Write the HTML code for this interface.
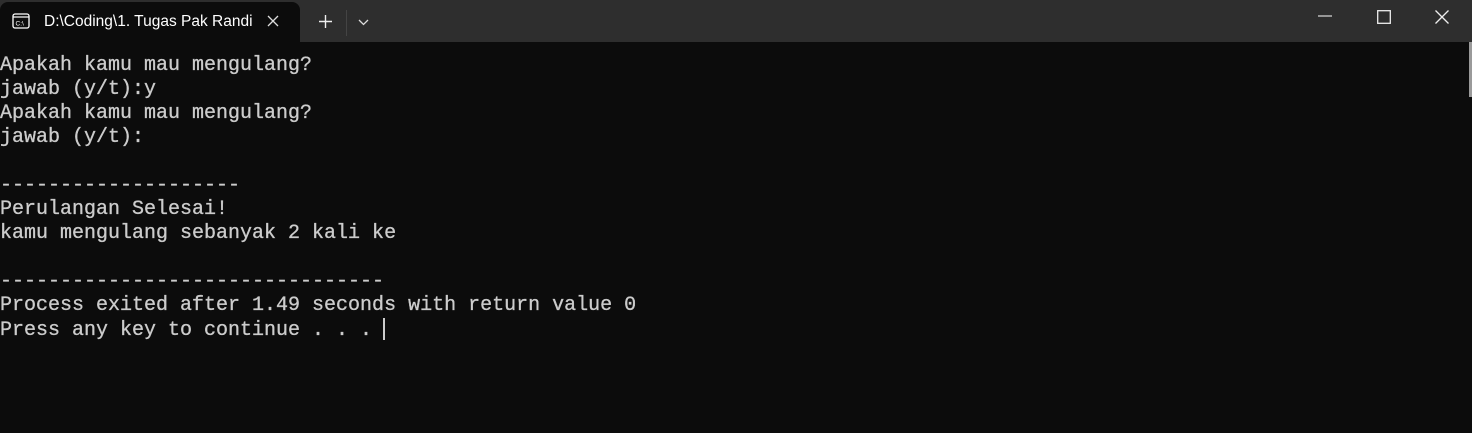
<!DOCTYPE html>
<html><head><meta charset="utf-8"><style>
*{margin:0;padding:0;box-sizing:border-box}
body{width:1472px;height:433px;background:#0c0c0c;overflow:hidden;position:relative;font-family:"Liberation Sans",sans-serif}
.bar{position:absolute;left:0;top:0;width:1472px;height:42px;background:#2e2e2e}
.tab{position:absolute;left:0;top:2px;width:300px;height:40px;background:#0c0c0c;border-radius:8px 8px 0 0}
.title{position:absolute;left:44px;top:13px;color:#fff;font-size:15.5px}
pre{position:absolute;left:0;top:54px;color:#cccccc;font-family:"Liberation Mono",monospace;font-size:20px;line-height:24px;-webkit-text-stroke:0.3px #cccccc}
.cur{display:inline-block;width:2px;height:22px;background:#ccc;vertical-align:-5px;margin-left:-1px}
.sb{position:absolute;left:1469px;top:42px;width:3px;height:55px;background:#9a9a9a}
</style></head><body>
<div class="bar"></div>
<div class="tab"></div>
<svg style="position:absolute;left:12px;top:13px" width="18" height="16" viewBox="0 0 18 16"><rect x="1" y="1" width="16" height="14" rx="2" fill="none" stroke="#fff" stroke-width="1.3"/><line x1="1" y1="4" x2="17" y2="4" stroke="#fff" stroke-width="1.2"/><text x="3.5" y="12.5" font-size="6.5" fill="#fff" font-family="Liberation Sans">C:\</text></svg>
<div class="title">D:\Coding\1. Tugas Pak Randi</div>
<svg style="position:absolute;left:267px;top:15px" width="12" height="12"><path d="M1 1L11 11M11 1L1 11" stroke="#ddd" stroke-width="1.3"/></svg>
<svg style="position:absolute;left:319px;top:15px" width="13" height="13"><path d="M6.5 0V13M0 6.5H13" stroke="#eee" stroke-width="1.4"/></svg>
<div style="position:absolute;left:346px;top:10px;width:1px;height:26px;background:#444"></div>
<svg style="position:absolute;left:358px;top:19px" width="11" height="7"><path d="M1 1L5.5 5.5L10 1" stroke="#ddd" stroke-width="1.3" fill="none"/></svg>
<svg style="position:absolute;left:1318px;top:15px" width="14" height="2"><path d="M0 1H14" stroke="#ddd" stroke-width="1.2"/></svg>
<svg style="position:absolute;left:1377px;top:10px" width="14" height="14"><rect x="0.7" y="0.7" width="12.6" height="12.6" fill="none" stroke="#eee" stroke-width="1.3"/></svg>
<svg style="position:absolute;left:1435px;top:10px" width="14" height="14"><path d="M0.5 0.5L13.5 13.5M13.5 0.5L0.5 13.5" stroke="#eee" stroke-width="1.3"/></svg>
<div class="sb"></div>
<pre>Apakah kamu mau mengulang?
jawab (y/t):y
Apakah kamu mau mengulang?
jawab (y/t):

--------------------
Perulangan Selesai!
kamu mengulang sebanyak 2 kali ke

--------------------------------
Process exited after 1.49 seconds with return value 0
Press any key to continue . . . <span class="cur"></span></pre>
</body></html>
